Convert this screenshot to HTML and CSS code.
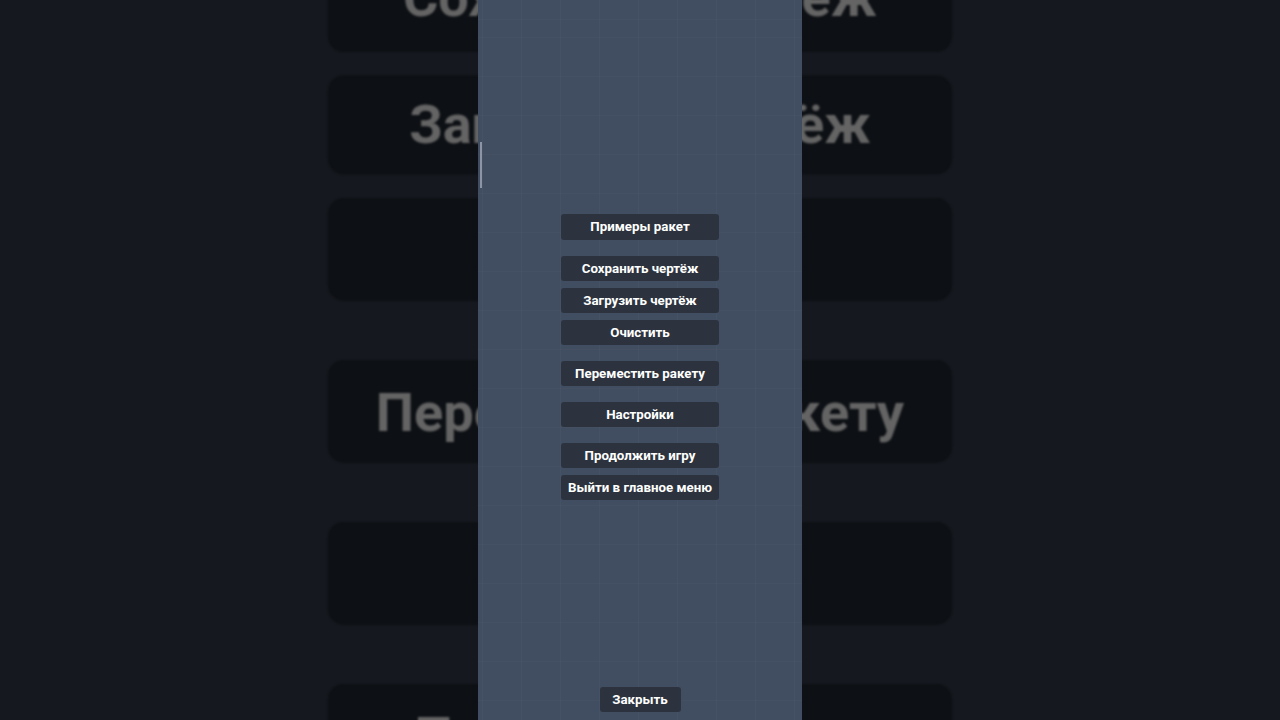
FILE: index.html
```html
<!DOCTYPE html>
<html lang="ru">
<head>
    <meta charset="UTF-8">
    <meta name="viewport" content="width=device-width, initial-scale=1.0">
    <title>Пауза</title>
    <link rel="stylesheet" href="styles.css">
</head>
<body>
    <!-- zoomed, dimmed copy of the menu behind the panel -->
    <div class="ghost">
        <div class="menu">
            <div class="group"><div class="btn">Примеры ракет</div></div>
            <div class="group">
                <div class="btn">Сохранить чертёж</div>
                <div class="btn">Загрузить чертёж</div>
                <div class="btn">Очистить</div>
            </div>
            <div class="group"><div class="btn">Переместить ракету</div></div>
            <div class="group"><div class="btn">Настройки</div></div>
            <div class="group">
                <div class="btn">Продолжить игру</div>
                <div class="btn">Выйти в главное меню</div>
            </div>
        </div>
    </div>

    <div class="panel">
        <span class="caret"></span>
        <div class="menu">
            <div class="group"><button class="btn">Примеры ракет</button></div>
            <div class="group">
                <button class="btn">Сохранить чертёж</button>
                <button class="btn">Загрузить чертёж</button>
                <button class="btn">Очистить</button>
            </div>
            <div class="group"><button class="btn">Переместить ракету</button></div>
            <div class="group"><button class="btn">Настройки</button></div>
            <div class="group">
                <button class="btn">Продолжить игру</button>
                <button class="btn">Выйти в главное меню</button>
            </div>
        </div>
        <button class="btn close">Закрыть</button>
    </div>
</body>
</html>
```

FILE: styles.css
```css
* { box-sizing: border-box; }
html, body { margin: 0; height: 100%; }
body { font-family: Roboto, "Liberation Sans", sans-serif; background-color: #15181e; overflow: hidden; display: flex; justify-content: center; position: relative; }

.menu { display: flex; flex-direction: column; align-items: center; gap: 16px; padding-top: 214px; }
.group { display: flex; flex-direction: column; gap: 7px; }
.group:first-child .btn { height: 26px; line-height: 26px; }
.btn { display: block; width: 158px; height: 25px; line-height: 25px; padding: 0; border: none; border-radius: 3px; background-color: #2c333e; color: #fff; font-family: inherit; font-size: 13.3px; font-weight: 700; text-align: center; white-space: nowrap; }

.ghost { position: absolute; inset: 0; transform: scale(3.95); transform-origin: 640px 360px; filter: blur(0.25px); }
.ghost .menu { gap: 15.1px; padding-top: 214.7px; }
.ghost .group { gap: 6px; }
.ghost .btn, .ghost .group:first-child .btn { height: 25.9px; line-height: 25.9px; padding-top: 0.7px; background-color: #0d1014; color: #646464; border-radius: 4px; font-size: 13.7px; }

.panel { position: relative; width: 324px; height: 720px; display: flex; flex-direction: column; align-items: center; background-color: #414d60;
    background-image: repeating-linear-gradient(90deg, rgba(255,255,255,0.025) 0 1px, transparent 1px 39px), repeating-linear-gradient(0deg, rgba(255,255,255,0.02) 0 1px, transparent 1px 39px);
    background-position: 4px 20px; }
.caret { position: absolute; left: 2px; top: 142px; width: 2px; height: 46px; background-color: #8b95a5; }
.close { width: 81px; margin-top: auto; margin-bottom: 8px; }
```
